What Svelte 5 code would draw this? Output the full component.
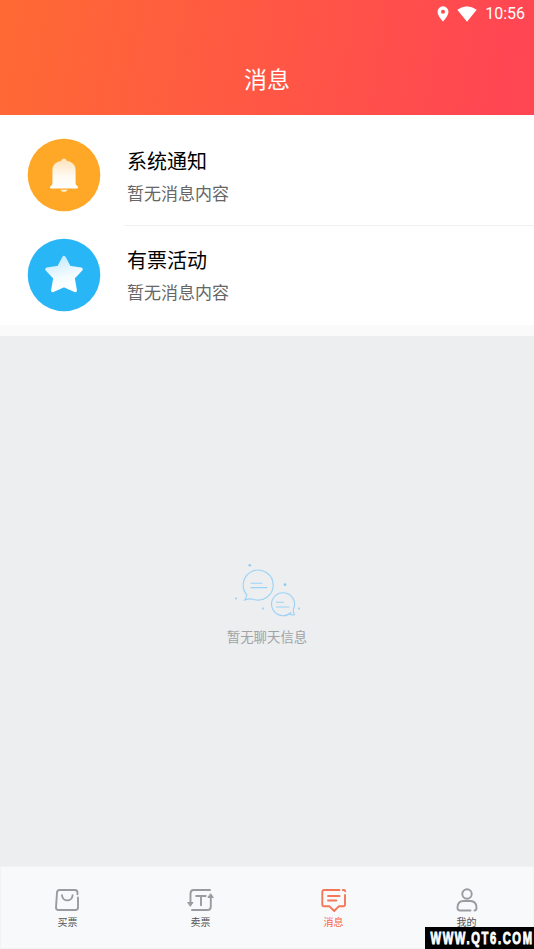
<script lang="ts">
  const messages = [
    { icon: 'bell', title: '系统通知', text: '暂无消息内容' },
    { icon: 'star', title: '有票活动', text: '暂无消息内容' },
  ];

  const tabs = [
    { icon: 'buy', label: '买票' },
    { icon: 'sell', label: '卖票' },
    { icon: 'message', label: '消息' },
    { icon: 'mine', label: '我的' },
  ];

  let active = $state('message');
</script>

<div class="screen">
  <header>
    <div class="status">
      <svg class="pin" width="12" height="16" viewBox="0 0 12 16">
        <path fill-rule="evenodd" d="M6 0.3a5.5 5.5 0 0 0-5.5 5.5C.5 9.9 6 15.6 6 15.6s5.500-5.700 5.500-9.800A5.500 5.500 0 0 0 6 .3zm0 3.500a2 2 0 1 1 0 4 2 2 0 0 1 0-4z" />
      </svg>
      <svg class="wifi" width="20" height="16" viewBox="0 0 20 16">
        <path d="M0.300 3.700Q10-3.300 19.700 3.700L10 15.700z" />
      </svg>
      <span>10:56</span>
    </div>
    <h1>消息</h1>
  </header>

  <ul class="list">
    {#each messages as item}
      <li>
        <svg class="avatar" width="74" height="74" viewBox="0 0 74 74">
          {#if item.icon === 'bell'}
            <defs>
              <linearGradient id="bell" x1="0" y1="0" x2="0" y2="1">
                <stop offset="0" stop-color="#ffe2b8" />
                <stop offset=".6" stop-color="#fffaf2" />
                <stop offset="1" stop-color="#fff" />
              </linearGradient>
            </defs>
            <circle cx="37" cy="37" r="36.300" fill="#ffa726" />
            <path fill="url(#bell)" d="M37 20.500c1.700 0 2.500 1 2.700 2.300 5.800 1.200 8.900 4.400 8.900 9.600v13.300c0 1.500 2.400 1.900 2.400 3.500 0 .8-.6 1.300-1.500 1.300H24.500c-.9 0-1.500-.5-1.500-1.300 0-1.600 2.400-2 2.400-3.500V32.400c0-5.200 3.100-8.400 8.900-9.600.2-1.300 1-2.300 2.700-2.300z" />
            <path fill="#fff0d8" d="M33.700 51.700h6.600c-.3 1.400-1.500 2.100-3.300 2.100s-3-.7-3.300-2.100z" />
          {:else}
            <defs>
              <linearGradient id="star" x1=".3" y1="0" x2=".6" y2="1">
                <stop offset="0" stop-color="#c5eafc" />
                <stop offset=".6" stop-color="#f5fcff" />
                <stop offset="1" stop-color="#fff" />
              </linearGradient>
            </defs>
            <circle cx="37" cy="37" r="36.300" fill="#29b6f6" />
            <path fill="url(#star)" stroke="url(#star)" stroke-width="3.500" stroke-linejoin="round" d="M37 19.700l5.300 9.800 11.700 1.700-8 8.700 2.200 12.600L37 47.300l-11.200 5.200 2.200-12.600-8-8.700 11.700-1.700z" />
          {/if}
        </svg>
        <div class="body">
          <h2>{item.title}</h2>
          <p>{item.text}</p>
        </div>
      </li>
    {/each}
  </ul>

  <main>
    <svg width="70" height="58" viewBox="0 0 70 58" fill="none" stroke="#9bd3f7" stroke-width="1.100" stroke-linecap="round">
      <path d="M14.800 35.800A15 15 0 1 1 21.200 40.200Q17.500 39.200 12.800 40.900Q14.600 38.300 14.800 35.800z" />
      <path d="M19 24.300h11M19 28.600h16" />
      <path d="M59 53.500A11.500 11.500 0 1 1 61.500 50C61 52 61.500 53.700 62.500 55.700Q60.500 56.500 57 54.800" />
      <path d="M44.500 43.200h7M44.500 48h12.500" />
      <g fill="#93caef" stroke="none">
        <circle cx="17.800" cy="6.300" r="1.300" />
        <circle cx="53" cy="25.700" r="1.400" />
        <circle cx="4" cy="39.500" r=".9" />
        <circle cx="31" cy="49.500" r=".9" />
        <circle cx="67" cy="49.500" r=".9" />
      </g>
    </svg>
    <p>暂无聊天信息</p>
  </main>

  <nav>
    {#each tabs as tab}
      <button class:active={active === tab.icon} onclick={() => (active = tab.icon)}>
        <svg width="28" height="26" viewBox="0 0 28 26">
          {#if tab.icon === 'buy'}
            <path d="M24 10.500V20.500a2.500 2.500 0 0 1-2.500 2.500h-17A2.500 2.500 0 0 1 2 20.500L3 5.500A2.500 2.500 0 0 1 5.500 3h15.500Q23.300 3 23.500 5.500v1.800" />
            <path d="M8 8.300c.5 6.800 10.100 6.800 10.600 0" />
          {:else if tab.icon === 'sell'}
            <path d="M23 3H6.500Q3.500 3 3.500 6.500V17M5 23H20.500Q23.800 23 23.800 19.700V9" />
            <path d="M9.200 9h9.600M14 9v9.200" />
            <path class="arrow" d="M1 15.500h5L3.500 19zM21.300 10.500h5L23.800 7z" />
          {:else if tab.icon === 'message'}
            <path d="M19.500 3H4Q2.300 3 2.300 5V17.500Q2.300 19.300 4 19.300h5.500l4.700 4.700 4.500-4.700h4.500Q25 19.300 25 17.500V8M22.800 3h1Q25.200 3 25.200 4.300" />
            <path d="M8 9h11.500M8 13.500h8.300" />
          {:else}
            <circle cx="14" cy="7" r="4.700" />
            <path d="M17.500 23.500H7.200Q4.500 23.500 4.500 21V20Q5 14 10.500 14h7Q23.200 14.300 23.500 20v1Q23.500 23.500 21.500 23.500" />
          {/if}
        </svg>
        <span>{tab.label}</span>
      </button>
    {/each}
  </nav>

  <div class="watermark">
    <svg width="109" height="22" viewBox="0 0 109 22">
      <text x="8" y="17" transform="scale(.68 1)">WWW.QT6.COM</text>
    </svg>
  </div>
</div>

<style>
  :global(body) {
    margin: 0;
  }

  * {
    box-sizing: border-box;
  }

  .screen {
    position: relative;
    display: flex;
    flex-direction: column;
    width: 100%;
    height: 949px;
    overflow: hidden;
    background: #eceef0;
    font-family: Roboto, 'Noto Sans CJK SC', sans-serif;
  }

  h1,
  h2,
  p,
  ul {
    margin: 0;
    padding: 0;
    font-weight: 400;
  }

  header {
    flex: none;
    height: 115px;
    color: #fff;
    background: linear-gradient(100deg, #ff6a34 0%, #ff4653 95%);
  }

  .status {
    display: flex;
    align-items: center;
    justify-content: flex-end;
    height: 27px;
    padding-right: 9px;
    font-size: 16px;
    fill: #fff;
  }

  .pin {
    margin-right: 8px;
  }

  .wifi {
    margin-right: 8px;
  }

  h1 {
    padding-top: 37px;
    font-size: 23px;
    line-height: 34px;
    text-align: center;
  }

  .list {
    flex: none;
    height: 221px;
    padding-top: 10px;
    border-bottom: 11px solid #fafafa;
    background: #fff;
    list-style: none;
  }

  li {
    display: flex;
    height: 101px;
    padding-left: 27px;
  }

  .avatar {
    flex: none;
    margin: 13px 23px 0 0;
  }

  .body {
    flex: 1;
    padding: 21px 0 0 3px;
    border-bottom: 1px solid #f0f0f0;
  }

  li:last-child {
    height: 99px;
  }

  li:last-child .avatar {
    margin-top: 11.500px;
  }

  li:last-child .body {
    padding-top: 19px;
    border-bottom: 0;
  }

  h2 {
    color: #000;
    font-size: 20px;
    line-height: 32px;
  }

  .body p {
    color: #666;
    font-size: 17px;
    line-height: 32px;
  }

  main {
    display: flex;
    flex: 1;
    flex-direction: column;
    align-items: center;
    padding-top: 223px;
  }

  main p {
    margin-top: 11px;
    color: #a0a2a4;
    font-size: 13.400px;
    line-height: 20px;
  }

  nav {
    display: flex;
    flex: none;
    height: 83px;
    border: 1px solid #f2f3f5;
    background: #f8f9fb;
  }

  button {
    display: flex;
    flex: 1;
    flex-direction: column;
    align-items: center;
    margin: 0;
    padding: 20px 0 0;
    border: 0;
    color: #555;
    background: none;
    font-family: inherit;
    font-size: 10px;
    line-height: 16px;
    cursor: pointer;
  }

  button svg {
    margin-bottom: 2px;
    fill: none;
    stroke: #999b9e;
    stroke-width: 1.900;
    stroke-linecap: round;
    stroke-linejoin: round;
  }

  .arrow {
    fill: #999b9e;
    stroke-width: 1;
  }

  .active {
    color: #f8613f;
  }

  .active svg {
    stroke: #f4775a;
  }

  .watermark {
    position: absolute;
    right: 0;
    bottom: 0;
    width: 109px;
    height: 22px;
    background: #000;
  }

  .watermark svg {
    display: block;
  }

  .watermark text {
    fill: #fff;
    stroke: #fff;
    stroke-width: 0.900;
    font-family: 'Liberation Sans', sans-serif;
    font-size: 16.500px;
    font-weight: 700;
    letter-spacing: 2.400px;
  }
</style>
